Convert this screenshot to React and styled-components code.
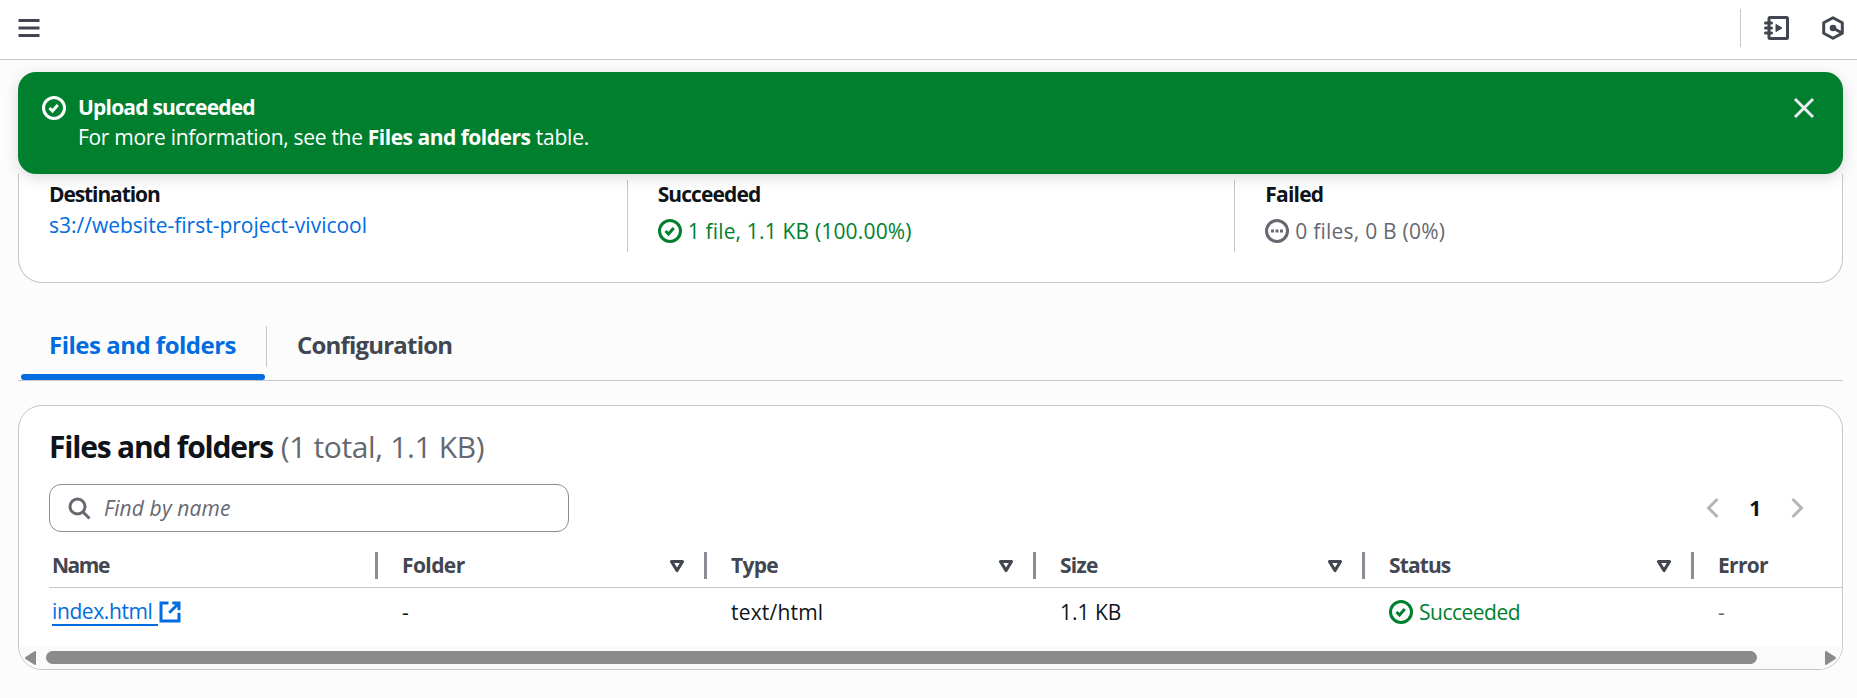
import React from 'react';
import styled, { createGlobalStyle } from 'styled-components';

const Global = createGlobalStyle`
  *, *::before, *::after { box-sizing: border-box; }
  html, body { margin: 0; height: 698px; overflow: hidden; background: #fcfcfc; }
  body {
    font-family: "Open Sans", "Noto Sans", sans-serif;
    font-size: 21px;
    line-height: 30px;
    color: #0f141a;
    white-space: nowrap;
  }
`;

const Txt = styled.span`
  letter-spacing: ${(p) => p.$ls ?? -0.3}px;
  font-weight: ${(p) => (p.$bold ? 700 : 400)};
`;

/* top bar */
const TopBar = styled.header`
  display: flex;
  justify-content: space-between;
  height: 60px;
  background: #fff;
  border-bottom: 1px solid #c6c6cd;
  padding: 0 12px 0 17px;
`;
const TopLeft = styled.div`
  padding-top: 16px;
  color: #424650;
`;
const TopRight = styled.div`
  display: flex;
  margin-top: 9px;
  height: 38px;
  padding: 7px 0 0 23px;
  gap: 33px;
  border-left: 1px solid #c6c6cd;
  color: #424650;
`;
const Svg = styled.svg`
  display: block;
  flex: none;
  overflow: visible;
  width: ${(p) => p.$size || 24}px;
  height: ${(p) => p.$size || 24}px;
  fill: none;
  stroke: currentColor;
  stroke-width: 2;
`;

const Main = styled.main`
  padding: 12px 14px 0 18px;
`;

/* success banner */
const Flash = styled.section`
  position: relative;
  z-index: 1;
  display: flex;
  height: 102px;
  padding: 20px 29px 0 24px;
  border-radius: 18px;
  background: #00802f;
  color: #fff;
  box-shadow: 0 4px 15px rgba(0, 7, 22, 0.14);
`;
const FlashIcon = styled.div`
  padding-top: 4px;
  width: 36px;
`;
const FlashText = styled.div`
  flex: 1;
`;
const FlashClose = styled.div`
  padding-top: 4px;
  margin-right: -2px;
  color: #ebebf0;
`;

/* summary */
const Summary = styled.section`
  display: grid;
  grid-template-columns: repeat(3, 1fr);
  height: 109px;
  padding: 6px 0 30px;
  background: #fff;
  border: 1px solid #c6c6cd;
  border-top: 0;
  border-radius: 0 0 24px 24px;
`;
const SummaryCol = styled.div`
  padding-left: 30px;
  & + & {
    border-left: 1px solid #c6c6cd;
  }
`;
const SummaryLabel = styled.div`
  height: 30px;
  line-height: 29px;
`;
const Status = styled.div`
  display: flex;
  align-items: center;
  gap: 6px;
  color: ${(p) => (p.$muted ? '#656871' : '#00802f')};
  margin-top: ${(p) => p.$top || 0}px;
`;
const Link = styled.a`
  color: #006ce0;
`;

/* tabs */
const Tabs = styled.nav`
  display: flex;
  height: 56px;
  margin-top: 42px;
  border-bottom: 1px solid #c6c6cd;
  font-size: 24px;
`;
const Tab = styled.div`
  display: flex;
  flex-direction: column;
  justify-content: space-between;
  min-width: 248px;
  padding-top: 4px;
  color: ${(p) => (p.$active ? '#006ce0' : '#424650')};
`;
const TabLabel = styled.div`
  padding-left: ${(p) => (p.$first ? 31 : 30)}px;
  line-height: 31px;
  height: 31px;
`;
const TabBar = styled.div`
  height: 6px;
  margin: 0 1px 0 3px;
  border-radius: 3px;
  background: #006ce0;
`;
const TabDivider = styled.div`
  width: 1px;
  height: 41px;
  margin-top: 1px;
  background: #c6c6cd;
`;

/* table card */
const Card = styled.section`
  display: flex;
  flex-direction: column;
  height: 265px;
  margin-top: 24px;
  background: #fff;
  border: 1px solid #c6c6cd;
  border-radius: 24px;
  overflow: hidden;
`;
const Heading = styled.h2`
  margin: 23px 0 0 30px;
  font-size: 30px;
  line-height: 36px;
  font-weight: 400;
`;
const Counter = styled(Txt)`
  color: #656871;
`;
const Tools = styled.div`
  display: flex;
  justify-content: space-between;
  align-items: center;
  margin: 19px 33px 0 30px;
`;
const Search = styled.div`
  display: flex;
  align-items: center;
  gap: 13px;
  width: 520px;
  height: 48px;
  padding-left: 17px;
  border: 1px solid #8c8c94;
  border-radius: 12px;
  color: #656871;
  font-style: italic;
`;
const Pager = styled.div`
  display: flex;
  align-items: center;
  color: #b4b4bb;
`;
const PageNo = styled.div`
  width: 60px;
  text-align: center;
  color: #0f141a;
`;
const Row = styled.div`
  display: grid;
  grid-template-columns: repeat(5, 329px) 1fr;
  margin-left: 30px;
  height: ${(p) => p.$h}px;
  ${(p) => p.$head && 'color: #424650; border-bottom: 1px solid #c6c6cd;'}
`;
const Cell = styled.div`
  display: flex;
  align-items: center;
  padding-left: ${(p) => (p.$first ? 3 : 24)}px;
  color: ${(p) => p.$color || 'inherit'};
`;
const HeadCell = styled(Cell)`
  justify-content: space-between;
  height: 27px;
  line-height: 27px;
  margin-top: 20px;
`;
const HeadLabel = styled(Txt)`
  padding-bottom: 1px;
`;
const HeadEnd = styled.div`
  display: flex;
  align-items: center;
  gap: 19px;
`;
const Resizer = styled.div`
  width: 3px;
  height: 27px;
  background: #8c8c94;
`;
const FileLink = styled.a`
  display: flex;
  align-items: center;
  color: #006ce0;
`;
const FileName = styled.span`
  width: 106px;
  height: 29px;
  border-bottom: 2px solid #006ce0;
  line-height: 28px;
`;
const Scroll = styled.div`
  display: flex;
  align-items: center;
  gap: 10px;
  height: 23px;
  margin-top: auto;
  padding: 0 6px;
  background: #fafafa;
`;
const Track = styled.div`
  flex: 1;
`;
const Thumb = styled.div`
  width: 1711px;
  height: 13px;
  border-radius: 7px;
  background: #8b8b8b;
`;
const Arrow = styled.svg`
  display: block;
  flex: none;
  width: 11px;
  height: 14px;
  fill: #8b8b8b;
`;

const Check = () => (
  <Svg viewBox="0 0 16 16">
    <circle cx="8" cy="8" r="7" />
    <path d="m5 8 2 2 3.5-4" />
  </Svg>
);

const heads = [
  ['Name', false, -1.5],
  ['Folder', true, -0.6],
  ['Type', true, -0.7],
  ['Size', true, -0.7],
  ['Status', true, -0.9],
];

export default function App() {
  return (
    <>
      <Global />
      <TopBar>
        <TopLeft>
          <Svg viewBox="0 0 16 16"><path d="M1 3h14M1 8h14M1 13h14" /></Svg>
        </TopLeft>
        <TopRight>
          <Svg viewBox="0 0 24 24">
            <rect x="5" y="1.500" width="18.500" height="21" rx="1" strokeWidth="3" />
            <path d="M1.500 7h6M1.500 12h6M1.500 17h6" strokeWidth="3" strokeLinecap="round" />
            <path d="M12 8.500v7l6-3.500z" fill="currentColor" strokeWidth="1" strokeLinejoin="round" />
          </Svg>
          <Svg viewBox="0 0 24 24">
            <path d="M12 1.700 21.300 6.800V17.200L12 22.300 2.700 17.200V6.800z" strokeWidth="3" strokeLinejoin="round" />
            <circle cx="12" cy="12" r="3.300" fill="currentColor" stroke="none" />
            <path d="m12 12 9 5" strokeWidth="3" />
          </Svg>
        </TopRight>
      </TopBar>
      <Main>
        <Flash>
          <FlashIcon><Check /></FlashIcon>
          <FlashText>
            <div><Txt $bold $ls={-0.8}>Upload succeeded</Txt></div>
            <div>
              <Txt>For more information, see the </Txt>
              <Txt $bold $ls={-0.5}>Files and folders</Txt>
              <Txt $ls={-0.2}> table.</Txt>
            </div>
          </FlashText>
          <FlashClose>
            <Svg viewBox="0 0 16 16"><path d="m2 2 12 12M14 2 2 14" /></Svg>
          </FlashClose>
        </Flash>

        <Summary>
          <SummaryCol>
            <SummaryLabel><Txt $bold $ls={-1.1}>Destination</Txt></SummaryLabel>
            <Link><Txt $ls={0}>s3://website-first-project-vivicool</Txt></Link>
          </SummaryCol>
          <SummaryCol>
            <SummaryLabel><Txt $bold $ls={-0.9}>Succeeded</Txt></SummaryLabel>
            <Status $top={6}><Check /><Txt $ls={0.17}>1 file, 1.1 KB (100.00%)</Txt></Status>
          </SummaryCol>
          <SummaryCol>
            <SummaryLabel><Txt $bold $ls={-0.8}>Failed</Txt></SummaryLabel>
            <Status $muted $top={6}>
              <Svg viewBox="0 0 16 16">
                <circle cx="8" cy="8" r="7" />
                <path d="M4 8h2M7 8h2M10 8h2" />
              </Svg>
              <Txt $ls={0.22}>0 files, 0 B (0%)</Txt>
            </Status>
          </SummaryCol>
        </Summary>

        <Tabs>
          <Tab $active>
            <TabLabel $first><Txt $bold $ls={-0.5}>Files and folders</Txt></TabLabel>
            <TabBar />
          </Tab>
          <TabDivider />
          <Tab>
            <TabLabel><Txt $bold $ls={-0.8}>Configuration</Txt></TabLabel>
          </Tab>
        </Tabs>

        <Card>
          <Heading>
            <Txt $bold $ls={-1.2}>Files and folders</Txt>{' '}
            <Counter $ls={-0.37}>(1 total, 1.1 KB)</Counter>
          </Heading>
          <Tools>
            <Search>
              <Svg viewBox="0 0 16 16">
                <circle cx="7" cy="7" r="5" />
                <path d="m15 15-4.500-4.500" />
              </Svg>
              <Txt $ls={0.12}>Find by name</Txt>
            </Search>
            <Pager>
              <Svg viewBox="0 0 16 16"><path d="M11 2 5 8l6 6" /></Svg>
              <PageNo><Txt $bold>1</Txt></PageNo>
              <Svg viewBox="0 0 16 16"><path d="m5 2 6 6-6 6" /></Svg>
            </Pager>
          </Tools>
          <Row $head $h={56}>
            {heads.map(([label, filter, ls]) => (
              <HeadCell key={label} $first={!filter}>
                <HeadLabel $bold $ls={ls}>{label}</HeadLabel>
                <HeadEnd>
                  {filter && (
                    <Svg viewBox="0 0 16 16" $size={16}>
                      <path d="M2.500 3.500h11L8 12.500z" strokeWidth="3.200" strokeLinejoin="round" />
                    </Svg>
                  )}
                  <Resizer />
                </HeadEnd>
              </HeadCell>
            ))}
            <HeadCell><HeadLabel $bold $ls={-0.7}>Error</HeadLabel></HeadCell>
          </Row>
          <Row $h={47}>
            <Cell $first>
              <FileLink>
                <FileName><Txt $ls={-0.4}>index.html</Txt></FileName>
                <Svg viewBox="0 0 16 16">
                  <path d="M14 8.500V14H2V2h5M9.500 2H14v4.800M14 2 7.500 8.500" />
                </Svg>
              </FileLink>
            </Cell>
            <Cell>-</Cell>
            <Cell><Txt $ls={0.2}>text/html</Txt></Cell>
            <Cell><Txt $ls={0}>1.1 KB</Txt></Cell>
            <Cell>
              <Status><Check /><Txt $ls={-0.5}>Succeeded</Txt></Status>
            </Cell>
            <Cell $color="#656871">-</Cell>
          </Row>
          <Scroll>
            <Arrow viewBox="0 0 11 14"><path d="M11 1v12q0 1.500-1.500 .7L.5 8q-1-1 0-2L9.500 .3Q11-.5 11 1z" /></Arrow>
            <Track><Thumb /></Track>
            <Arrow viewBox="0 0 11 14"><path d="M0 1v12q0 1.500 1.500 .7L10.500 8q1-1 0-2L1.500 .3Q0-.5 0 1z" /></Arrow>
          </Scroll>
        </Card>
      </Main>
    </>
  );
}
